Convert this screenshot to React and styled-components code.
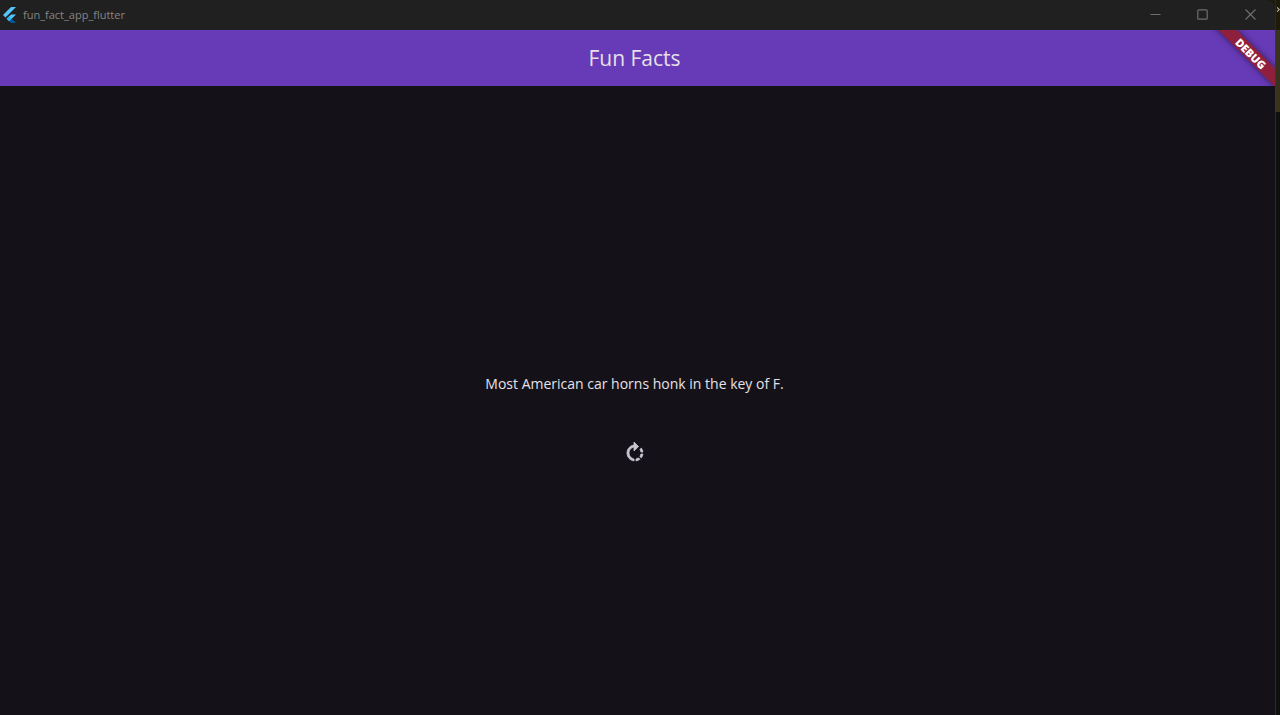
import styled, { createGlobalStyle } from 'styled-components';
import { MdRotateRight } from 'react-icons/md';

const GlobalStyle = createGlobalStyle`
  * {
    box-sizing: border-box;
  }

  body {
    margin: 0;
    background-color: #0f110f;
    font-family: 'Open Sans', 'Noto Sans', sans-serif;
  }
`;

// Window styles

const Desktop = styled.div`
  display: flex;
  min-height: 100vh;
  background-color: #1e1b0a;
`;

const Window = styled.div`
  display: flex;
  flex: 1;
  flex-direction: column;
  border-top-right-radius: 8px;
  overflow: hidden;
  background-color: #141218;
`;

const Backdrop = styled.div`
  display: flex;
  flex-direction: column;
  width: 5px;
  overflow: hidden;
`;

const BackdropBlock = styled.div`
  display: flex;
  flex: ${(props) => (props.$height ? 'none' : 1)};
  height: ${(props) => (props.$height ? `${props.$height}px` : 'auto')};
  padding: 6px 0 0 1px;
  border-left: 1px solid ${(props) => props.$edge};
  background-color: ${(props) => props.$color};
  color: #c8c4b0;
`;

// Title bar styles

const TitleBar = styled.div`
  display: flex;
  align-items: center;
  height: 30px;
  padding-left: 2px;
  background-color: #202020;
`;

const WindowTitle = styled.span`
  flex: 1;
  margin-left: 6px;
  font-size: 11px;
  line-height: 16px;
  color: #858585;
`;

const WindowButton = styled.button`
  display: flex;
  align-items: center;
  justify-content: center;
  width: 47px;
  height: 30px;
  padding: 0 0 2px;
  border: none;
  background: none;
  color: #6e6e6e;

  &:last-child {
    width: 49px;
  }
`;

// App styles

const AppBar = styled.header`
  position: relative;
  display: flex;
  align-items: center;
  justify-content: center;
  height: 56px;
  padding-right: 6px;
  background-color: #673ab7;
`;

const AppTitle = styled.h1`
  margin: 0;
  font-size: 21px;
  font-weight: 400;
  line-height: 28px;
  color: #e6e0e9;
`;

const BannerCorner = styled.div`
  position: absolute;
  top: 0;
  right: 0;
  width: 80px;
  height: 56px;
  overflow: hidden;
  pointer-events: none;
`;

const Banner = styled.div`
  position: absolute;
  top: 17px;
  right: -24px;
  width: 96px;
  height: 13px;
  transform: rotate(45deg);
  background-color: #8f203d;
  box-shadow: 0 0 6px rgba(0, 0, 0, 0.5);
  font-size: 11px;
  font-weight: 800;
  line-height: 13px;
  text-align: center;
  color: #fff;
`;

const Body = styled.main`
  display: flex;
  flex: 1;
  flex-direction: column;
  align-items: center;
  justify-content: center;
  padding: 37px 6px 0 0;
`;

const Fact = styled.p`
  margin: 0;
  padding: 8px 16px;
  font-size: 14px;
  line-height: 20px;
  text-align: center;
  color: #e6e0e9;
`;

const RotateButton = styled.button`
  display: flex;
  align-items: center;
  justify-content: center;
  width: 40px;
  height: 40px;
  margin-top: 31px;
  padding: 0;
  border: none;
  border-radius: 50%;
  background: none;
  font-size: 24px;
  color: #cac4d0;

  & path:last-child {
    stroke: currentColor;
    stroke-width: 0.8px;
  }
`;

const FlutterLogo = () => (
  <svg width="15" height="18" viewBox="0 0 166 202" aria-hidden="true">
    <path fill="#54c5f8" d="M37.7 128.9 9.8 101 100.4 10.4H156.2Z" />
    <path fill="#54c5f8" d="M156.2 94H100.4L51.6 142.8 79.5 170.7Z" />
    <path fill="#01579b" d="M79.5 170.7 100.4 191.6H156.2L107.4 142.8Z" />
    <path fill="#29b6f6" d="M51.6 142.8 79.5 114.9 107.4 142.8 79.5 170.7Z" />
  </svg>
);

const MinimizeIcon = () => (
  <svg width="11" height="11" viewBox="0 0 11 11" fill="none" stroke="currentColor">
    <path d="M0.5 5.5H10.5" />
  </svg>
);

const MaximizeIcon = () => (
  <svg width="11" height="11" viewBox="0 0 11 11" fill="none" stroke="currentColor">
    <rect x="0.8" y="0.8" width="9.4" height="9.4" rx="1" strokeWidth="1.2" />
  </svg>
);

const CloseIcon = () => (
  <svg width="11" height="11" viewBox="0 0 11 11" fill="none" stroke="currentColor">
    <path d="M0.5 0.5 10.5 10.5M10.5 0.5 0.5 10.5" strokeWidth="1.2" />
  </svg>
);

const ChevronIcon = () => (
  <svg width="4" height="7" viewBox="0 0 4 7" fill="none" stroke="currentColor" aria-hidden="true">
    <path d="M0 0.5 3 3.5 0 6.5" strokeWidth="1.4" />
  </svg>
);

export default function App() {
  return (
    <>
      <GlobalStyle />
      <Desktop>
        <Window>
          <TitleBar>
            <FlutterLogo />
            <WindowTitle>fun_fact_app_flutter</WindowTitle>
            <WindowButton aria-label="Minimize">
              <MinimizeIcon />
            </WindowButton>
            <WindowButton aria-label="Maximize">
              <MaximizeIcon />
            </WindowButton>
            <WindowButton aria-label="Close">
              <CloseIcon />
            </WindowButton>
          </TitleBar>
          <AppBar>
            <AppTitle>Fun Facts</AppTitle>
            <BannerCorner>
              <Banner>DEBUG</Banner>
            </BannerCorner>
          </AppBar>
          <Body>
            <Fact>Most American car horns honk in the key of F.</Fact>
            <RotateButton aria-label="Next fact">
              <MdRotateRight />
            </RotateButton>
          </Body>
        </Window>
        <Backdrop>
          <BackdropBlock $height={30} $color="#1e1b0a" $edge="#2c291b">
            <ChevronIcon />
          </BackdropBlock>
          <BackdropBlock $height={82} $color="#38331c" $edge="#3c3828" />
          <BackdropBlock $color="#0f110f" $edge="#2b2b2b" />
        </Backdrop>
      </Desktop>
    </>
  );
}
